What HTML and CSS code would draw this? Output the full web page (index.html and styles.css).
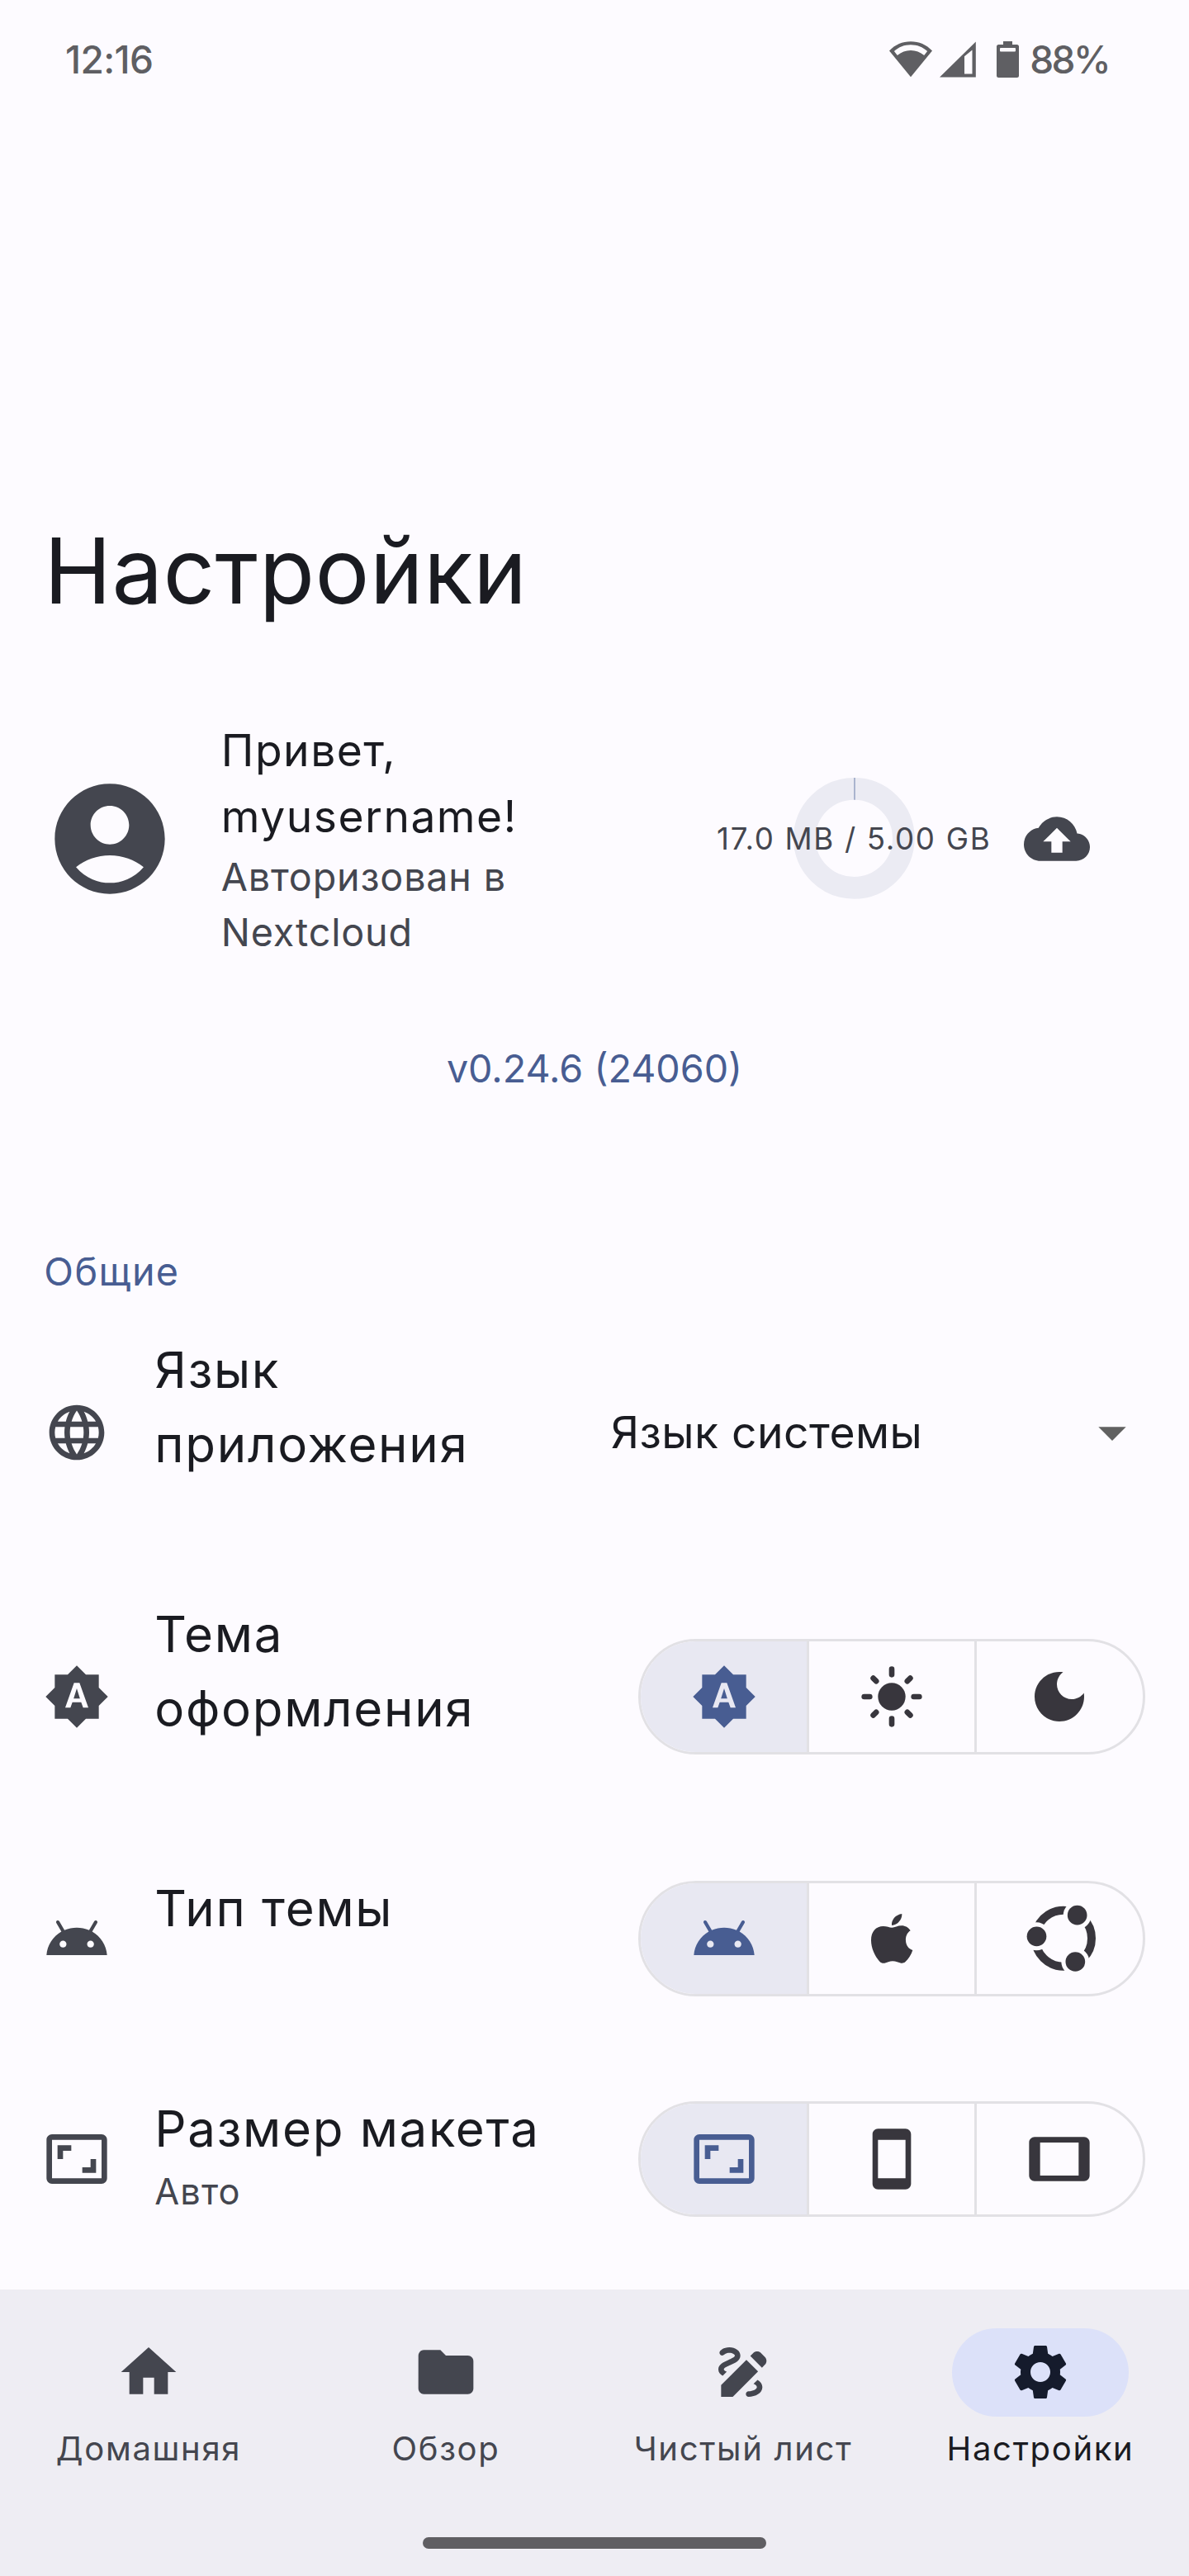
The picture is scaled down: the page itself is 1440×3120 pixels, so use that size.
FILE: index.html
```html
<!DOCTYPE html>
<html lang="ru">
<head>
<meta charset="utf-8">
<title>Настройки</title>
<link rel="stylesheet" href="styles.css">
</head>
<body>
<svg class="sprite" aria-hidden="true">
  <symbol id="i-auto" viewBox="0 0 24 24"><path fill-rule="evenodd" d="M10.85 12.65h2.3L12 9l-1.15 3.65zM20 8.69V4h-4.69L12 .69 8.69 4H4v4.69L.69 12 4 15.31V20h4.69L12 23.31 15.31 20H20v-4.69L23.31 12 20 8.69zM14.3 16l-.7-2h-3.2l-.7 2H7.8L11 7h2l3.2 9h-1.9z"/></symbol>
  <symbol id="i-android" viewBox="0 0 24 24"><path d="M17.6,9.48l1.84-3.18c0.16-0.31,0.04-0.69-0.26-0.85c-0.29-0.15-0.65-0.06-0.83,0.22l-1.88,3.24c-2.86-1.21-6.08-1.21-8.94,0L5.65,5.67c-0.19-0.29-0.58-0.38-0.87-0.2C4.5,5.65,4.41,6.01,4.56,6.3L6.4,9.48C3.3,11.25,1.28,14.44,1,18h22C22.72,14.44,20.7,11.25,17.6,9.48z M7,15.25c-0.69,0-1.25-0.56-1.25-1.25c0-0.69,0.56-1.25,1.25-1.25S8.25,13.31,8.25,14C8.25,14.69,7.69,15.25,7,15.25z M17,15.25c-0.69,0-1.25-0.56-1.25-1.25c0-0.69,0.56-1.25,1.25-1.25s1.25,0.56,1.25,1.25C18.25,14.69,17.69,15.25,17,15.25z"/></symbol>
  <symbol id="i-ratio" viewBox="0 0 24 24"><path d="M19 12h-2v3h-3v2h5v-5zM7 9h3V7H5v5h2V9zm14-6H3c-1.1 0-2 .9-2 2v14c0 1.1.9 2 2 2h18c1.1 0 2-.9 2-2V5c0-1.1-.9-2-2-2zm0 16.01H3V4.99h18v14.02z"/></symbol>
</svg>

<div class="screen">
  <header class="status">
    <span class="status-clock">12:16</span>
    <div class="status-icons">
      <svg class="status-wifi" viewBox="0 0 52 44"><path fill-rule="evenodd" d="M26 43.3 0 11.5C7 4.2 16 .3 26 .3s19 3.9 26 11.2zM9.8 17.1C14.5 13 20 11 26 11s11.5 2 16.2 6.1l3.9-5C40.5 7 33.7 4.3 26 4.3S11.5 7 5.9 12.1z"/></svg>
      <svg class="status-signal" viewBox="0 0 44 44"><path fill-rule="evenodd" d="M0 43.5 43.8.5v43zM30 18.2v21.3h9.5V10.5z"/></svg>
      <svg class="status-battery" viewBox="0 0 27 44"><path fill-rule="evenodd" d="M8 0h11v4h5.5A2.5 2.5 0 0 1 27 6.5v35a2.5 2.5 0 0 1-2.5 2.5h-22A2.5 2.5 0 0 1 0 41.5v-35A2.5 2.5 0 0 1 2.5 4H8zM5 8a1 1 0 0 0-1 1v2.5a1 1 0 0 0 1 1h17a1 1 0 0 0 1-1V9a1 1 0 0 0-1-1z"/></svg>
      <span class="status-percent">88%</span>
    </div>
  </header>

  <main class="content">
    <h1 class="title">Настройки</h1>

    <section class="profile">
      <svg class="avatar" viewBox="0 0 24 24"><path d="M12,2C6.48,2,2,6.48,2,12s4.48,10,10,10s10-4.48,10-10S17.52,2,12,2z M12,6c1.93,0,3.5,1.57,3.5,3.5S13.93,13,12,13s-3.5-1.57-3.5-3.5S10.07,6,12,6z M12,20c-2.03,0-4.43-0.82-6.14-2.88C7.55,15.8,9.68,15,12,15s4.45,0.8,6.14,2.12C16.43,19.18,14.03,20,12,20z"/></svg>
      <div class="profile-text">
        <div class="greeting">Привет,<br>myusername!</div>
        <div class="account">Авторизован в<br>Nextcloud</div>
      </div>
      <div class="quota">
        <svg class="quota-ring" viewBox="0 0 146.7 146.7"><circle cx="73.35" cy="73.35" r="60" fill="none" stroke="#ebebf3" stroke-width="26.7"/><path d="M73.35 0h1.3v26.7h-1.3z" fill="#8796bb"/></svg>
        <span class="quota-label">17.0 MB / 5.00 GB</span>
      </div>
      <svg class="icon" viewBox="0 0 24 24"><path d="M19.35 10.04C18.67 6.59 15.64 4 12 4 9.11 4 6.6 5.64 5.35 8.04 2.34 8.36 0 10.91 0 14c0 3.31 2.69 6 6 6h13c2.76 0 5-2.24 5-5 0-2.64-2.05-4.78-4.65-4.96zM14 13v4h-4v-4H7l5-5 5 5h-3z"/></svg>
    </section>

    <div class="version">v0.24.6 (24060)</div>

    <h2 class="section-title">Общие</h2>

    <div class="row row-tall">
      <svg class="icon" viewBox="0 0 24 24"><path d="M11.99 2C6.47 2 2 6.48 2 12s4.47 10 9.99 10C17.52 22 22 17.52 22 12S17.52 2 11.99 2zm6.93 6h-2.95c-.32-1.25-.78-2.45-1.38-3.56 1.84.63 3.37 1.91 4.33 3.56zM12 4.04c.83 1.2 1.48 2.53 1.91 3.96h-3.82c.43-1.43 1.08-2.76 1.91-3.96zM4.26 14C4.1 13.36 4 12.69 4 12s.1-1.36.26-2h3.38c-.08.66-.14 1.32-.14 2s.06 1.34.14 2H4.26zm.82 2h2.95c.32 1.25.78 2.45 1.38 3.56-1.84-.63-3.37-1.9-4.33-3.56zm2.95-8H5.08c.96-1.66 2.49-2.93 4.33-3.56C8.81 5.55 8.35 6.75 8.03 8zM12 19.96c-.83-1.2-1.48-2.53-1.91-3.96h3.82c-.43 1.43-1.08 2.76-1.91 3.96zM14.34 14H9.66c-.09-.66-.16-1.32-.16-2s.07-1.35.16-2h4.68c.09.65.16 1.32.16 2s-.07 1.34-.16 2zm.25 5.56c.6-1.11 1.06-2.31 1.38-3.56h2.95c-.96 1.65-2.49 2.93-4.33 3.56zM16.36 14c.08-.66.14-1.32.14-2s-.06-1.34-.14-2h3.38c.16.64.26 1.31.26 2s-.1 1.36-.26 2h-3.38z"/></svg>
      <div class="row-text row-text-tall"><div class="row-title">Язык<br>приложения</div></div>
      <div class="select">
        <span>Язык системы</span>
        <svg class="icon select-arrow" viewBox="0 0 24 24"><path d="M7 10l5 5 5-5z"/></svg>
      </div>
    </div>

    <div class="row row-tall">
      <svg class="icon"><use href="#i-auto"/></svg>
      <div class="row-text row-text-tall"><div class="row-title">Тема<br>оформления</div></div>
      <div class="segmented">
        <div class="segment segment-on"><svg class="icon"><use href="#i-auto"/></svg></div>
        <div class="segment"><svg class="icon" viewBox="0 0 24 24"><circle cx="12" cy="12" r="5"/><path class="rays" d="M12 2v2M12 20v2M2 12h2M20 12h2M5.28 5.28l1.07 1.07M17.65 17.65l1.07 1.07M5.28 18.72l1.07-1.07M17.65 6.35l1.07-1.07"/></svg></div>
        <div class="segment"><svg class="icon" viewBox="0 0 24 24"><path d="M12,3c-4.97,0-9,4.03-9,9s4.03,9,9,9s9-4.03,9-9c0-0.46-0.04-0.92-0.1-1.36c-0.98,1.37-2.58,2.26-4.4,2.26c-2.98,0-5.4-2.42-5.4-5.4c0-1.81,0.89-3.42,2.26-4.4C12.92,3.04,12.46,3,12,3z"/></svg></div>
      </div>
    </div>

    <div class="row">
      <svg class="icon"><use href="#i-android"/></svg>
      <div class="row-text"><div class="row-title">Тип темы</div></div>
      <div class="segmented">
        <div class="segment segment-on"><svg class="icon"><use href="#i-android"/></svg></div>
        <div class="segment"><svg class="icon" viewBox="30 54 240 240"><path d="M218 145C205 153 200 168 201 182C202 198 211 211 226 216C221 232 211 248 199 259C194 263 189 264 184 263C175 261 165 256 153 256C142 256 133 261 124 263C116 264 111 262 106 257C88 237 75 208 75 180C75 148 93 129 119 129C132 129 141 134 151 134C161 134 171 127 186 127C199 127 211 134 218 145ZM187 84C188 104 172 125 150 126C148 106 164 87 187 84Z"/></svg></div>
        <div class="segment"><svg class="icon-large" viewBox="624 39 270 270">
          <mask id="gaps" maskUnits="userSpaceOnUse" x="624" y="39" width="270" height="270"><path fill="#fff" d="M624 39h270v270H624z"/><circle fill="#000" cx="824" cy="89" r="51"/><circle fill="#000" cx="676" cy="166" r="51"/><circle fill="#000" cx="817" cy="258" r="51"/></mask>
          <circle class="ring" cx="774" cy="173" r="102" mask="url(#gaps)"/><circle cx="824" cy="89" r="35.5"/><circle cx="676.5" cy="166" r="35.5"/><circle cx="817" cy="258" r="35.5"/></svg></div>
      </div>
    </div>

    <div class="row">
      <svg class="icon"><use href="#i-ratio"/></svg>
      <div class="row-text"><div class="row-title">Размер макета</div><div class="row-note">Авто</div></div>
      <div class="segmented">
        <div class="segment segment-on"><svg class="icon"><use href="#i-ratio"/></svg></div>
        <div class="segment"><svg class="icon" viewBox="0 0 24 24"><path d="M17 1.01L7 1c-1.1 0-1.99.9-1.99 2v18c0 1.1.89 2 1.99 2h10c1.1 0 2-.9 2-2V3c0-1.1-.9-1.99-2-1.99zM17 19H7V5h10v14z"/></svg></div>
        <div class="segment"><svg class="icon" viewBox="0 0 24 24"><path d="M21 4H3c-1.1 0-2 .9-2 2v12c0 1.1.9 2 2 2h18c1.1 0 1.99-.9 1.99-2L23 6c0-1.1-.9-2-2-2zm-2 14H5V6h14v12z"/></svg></div>
      </div>
    </div>
  </main>

  <nav class="nav">
    <div class="tabs">
      <a class="tab"><span class="pill"><svg class="icon" viewBox="0 0 24 24"><path d="M10 20v-6h4v6h5v-8h3L12 3 2 12h3v8z"/></svg></span><span class="tab-label">Домашняя</span></a>
      <a class="tab"><span class="pill"><svg class="icon" viewBox="0 0 24 24"><path d="M10 4H4c-1.1 0-1.99.9-1.99 2L2 18c0 1.1.9 2 2 2h16c1.1 0 2-.9 2-2V8c0-1.1-.9-2-2-2h-8l-2-2z"/></svg></span><span class="tab-label">Обзор</span></a>
      <a class="tab"><span class="pill"><svg class="icon" viewBox="0 0 24 24"><path d="M18.85,10.39l1.06-1.06c0.78-0.78,0.78-2.05,0-2.83L18.5,5.09c-0.78-0.78-2.05-0.78-2.83,0l-1.06,1.06L18.85,10.39z M13.19,7.56L4,16.76V21h4.24l9.19-9.19L13.19,7.56z M19,17.5c0,2.19-2.54,3.5-5,3.5c-0.55,0-1-0.45-1-1s0.45-1,1-1c1.54,0,3-0.73,3-1.5c0-0.47-0.48-0.87-1.23-1.2l1.48-1.48C18.32,15.45,19,16.29,19,17.5z M4.58,13.35C3.61,12.79,3,12.06,3,11c0-1.8,1.89-2.63,3.56-3.36C7.59,7.18,9,6.56,9,6c0-0.41-0.78-1-2-1C5.74,5,5.2,5.61,5.17,5.64C4.82,6.05,4.19,6.1,3.77,5.76C3.36,5.42,3.28,4.81,3.62,4.38C3.73,4.24,4.76,3,7,3c2.24,0,4,1.32,4,3c0,1.87-1.93,2.72-3.64,3.47C6.42,9.88,5,10.5,5,11c0,0.31,0.43,0.6,1.07,0.86L4.58,13.35z"/></svg></span><span class="tab-label">Чистый лист</span></a>
      <a class="tab tab-on"><span class="pill"><svg class="icon" viewBox="0 0 24 24"><path d="M19.14,12.94c0.04-0.3,0.06-0.61,0.06-0.94c0-0.32-0.02-0.64-0.07-0.94l2.03-1.58c0.18-0.14,0.23-0.41,0.12-0.61l-1.92-3.32c-0.12-0.22-0.37-0.29-0.59-0.22l-2.39,0.96c-0.5-0.38-1.03-0.7-1.62-0.94L14.4,2.81c-0.04-0.24-0.24-0.41-0.48-0.41h-3.84c-0.24,0-0.43,0.17-0.47,0.41L9.25,5.35C8.66,5.59,8.12,5.92,7.63,6.29L5.24,5.33c-0.22-0.08-0.47,0-0.59,0.22L2.74,8.87C2.62,9.08,2.66,9.34,2.86,9.48l2.03,1.58C4.84,11.36,4.8,11.69,4.8,12s0.02,0.64,0.07,0.94l-2.03,1.58c-0.18,0.14-0.23,0.41-0.12,0.61l1.92,3.32c0.12,0.22,0.37,0.29,0.59,0.22l2.39-0.96c0.5,0.38,1.03,0.7,1.62,0.94l0.36,2.54c0.05,0.24,0.24,0.41,0.48,0.41h3.84c0.24,0,0.44-0.17,0.47-0.41l0.36-2.54c0.59-0.24,1.13-0.56,1.62-0.94l2.39,0.96c0.22,0.08,0.47,0,0.59-0.22l1.92-3.32c0.12-0.22,0.07-0.47-0.12-0.61L19.14,12.94z M12,15.6c-1.98,0-3.6-1.62-3.6-3.6s1.62-3.6,3.6-3.6s3.6,1.62,3.6,3.6S13.98,15.6,12,15.6z"/></svg></span><span class="tab-label">Настройки</span></a>
    </div>
    <div class="handle"></div>
  </nav>
</div>
</body>
</html>
```
FILE: styles.css
```css
* { box-sizing: border-box; margin: 0; padding: 0; }

body {
  width: 1440px;
  background: #fdfbff;
  color: #1a1b21;
  font-family: "Inter", "Noto Sans", sans-serif;
  font-weight: 400;
}

svg { display: block; flex: none; fill: currentColor; }
.sprite { position: absolute; width: 0; height: 0; }

.screen { display: flex; flex-direction: column; height: 3120px; overflow: hidden; }

/* Status bar */
.status {
  display: flex;
  justify-content: space-between;
  height: 145px;
  padding: 0 97px 0 79px;
  color: #5f5f63;
  font-size: 46px;
  font-weight: 500;
  line-height: 145px;
}
.status-clock { letter-spacing: -0.6px; }
.status-icons { display: flex; align-items: flex-start; padding-top: 50px; }
.status-wifi { width: 52px; height: 44px; }
.status-signal { width: 44px; height: 44px; margin-left: 9.5px; }
.status-battery { width: 27px; height: 44px; margin-left: 25px; }
.status-percent { margin: -50px 0 0 13px; letter-spacing: -2.6px; }

/* Page */
.content { flex: 1; padding: 479.5px 53.33px 0; }
.title {
  font-size: 110px;
  font-weight: 400;
  line-height: 133.33px;
  letter-spacing: 0.3px;
}

.icon { width: 80px; height: 80px; color: #44464f; }
.icon-large { width: 90px; height: 90px; }

.profile {
  display: flex;
  align-items: center;
  margin-top: 111px;
  padding-right: 66.67px;
  color: #44464f;
}
.avatar { width: 160px; height: 160px; }
.profile-text { flex: 1; margin-left: 54.5px; }
.greeting { color: #1a1b21; font-size: 53.33px; line-height: 80px; letter-spacing: 1.5px; }
.account { font-size: 46.67px; line-height: 66.67px; letter-spacing: 0.83px; }
.quota {
  position: relative;
  display: flex;
  align-items: center;
  justify-content: center;
  width: 146.67px;
  height: 146.67px;
  margin-right: 132.5px;
}
.quota-ring { width: 146.67px; height: 146.67px; }
.quota-label { position: absolute; font-size: 36.67px; letter-spacing: 1.67px; white-space: nowrap; }

.version {
  margin-top: 98.5px;
  color: #485d92;
  font-size: 46.67px;
  line-height: 66.67px;
  text-align: center;
}

.section-title {
  margin-top: 180px;
  margin-bottom: 0.7px;
  color: #485d92;
  font-size: 46.67px;
  font-weight: 400;
  line-height: 66.67px;
  letter-spacing: 1.4px;
}

/* Settings rows */
.row { display: flex; align-items: center; height: 267px; }
.row-tall { height: 320px; }
.row-text { flex: 1; height: 164px; margin-left: 54px; }
.row-text-tall { height: 241px; }
.row-title { font-size: 60px; line-height: 90px; letter-spacing: 1.7px; white-space: nowrap; }
.row-note { color: #44464f; font-size: 43.33px; line-height: 62px; letter-spacing: 1.1px; }

.select {
  display: flex;
  align-items: center;
  justify-content: space-between;
  width: 647px;
  font-size: 53.33px;
  letter-spacing: 0.5px;
}
.select-arrow { color: #616161; }

.segmented {
  display: flex;
  width: 613.33px;
  height: 140px;
  border: 3.33px solid #e2e1e5;
  border-radius: 70px;
  overflow: hidden;
}
.segment { flex: 1; display: flex; align-items: center; justify-content: center; }
.segment + .segment { border-left: 3.33px solid #e2e1e5; }
.segment, .segment .icon { color: #38363d; }
.segment-on { background: #e8e8f2; }
.segment-on .icon { color: #485d92; }
.rays { fill: none; stroke: currentColor; stroke-width: 2; stroke-linecap: round; }
.ring { fill: none; stroke: currentColor; stroke-width: 30; }

/* Bottom navigation */
.nav {
  display: flex;
  flex-direction: column;
  align-items: center;
  justify-content: space-between;
  height: 346.67px;
  padding: 46.67px 0 33.33px;
  background: #eeedf3;
}
.tabs { display: grid; grid-template-columns: repeat(4, 1fr); width: 100%; }
.tab { display: flex; flex-direction: column; align-items: center; gap: 12px; color: #44464f; }
.pill {
  display: flex;
  align-items: center;
  justify-content: center;
  width: 213.33px;
  height: 106.67px;
  border-radius: 54px;
}
.tab-label { font-size: 40px; line-height: 53.33px; letter-spacing: 1.67px; white-space: nowrap; }
.tab-on { color: #1a1b21; }
.tab-on .pill { background: #dce1f9; }
.tab-on .icon { color: #151b2c; }
.handle { width: 416px; height: 13.5px; border-radius: 7px; background: #5f5e62; }
```
